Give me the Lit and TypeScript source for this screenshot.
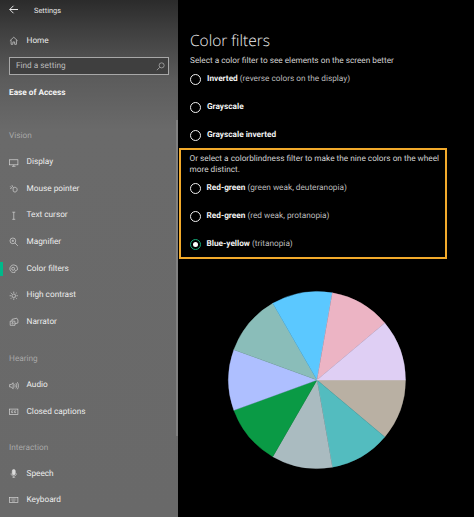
import { LitElement, html, css, svg } from "lit";
import { customElement } from "lit/decorators.js";

const ic = (body: unknown) => html`<svg class="ic" viewBox="0 0 16 16" fill="none" stroke="currentColor" stroke-width="1">${body}</svg>`;

const icons: Record<string, unknown> = {
  home: svg`<path d="M1.500 8 8 2l6.500 6M3.500 7v7h3v-4h3v4h3V7"/>`,
  display: svg`<rect x="1" y="3" width="14" height="8.500"/><path d="M8 11.500V14M5 14h6"/>`,
  mouse: svg`<path d="M2 4l3 3M5 2l1 3M2 7.500h2"/><path d="M7 6v6c1 2 5 2 6 0 1-2 1-4 0-5-1-1.500-4-2-6-1Z"/>`,
  text: svg`<path d="M5.500 2h5M5.500 14h5M8 2v12"/>`,
  magnifier: svg`<circle cx="6.500" cy="6.500" r="4.800"/><path d="M10 10l5 5M4.500 6.500h4M6.500 4.500v4"/>`,
  color: svg`<path d="M8 1.500a6.500 6.500 0 1 0 2 12.700c1-.6-.6-2 .4-3s4 .7 4-3.200A6.500 6.500 0 0 0 8 1.500Z"/><circle cx="7" cy="8" r="2.500"/>`,
  contrast: svg`<circle cx="8" cy="8" r="3"/><path d="M8 1v2.500M8 12.500V15M1 8h2.500M12.500 8H15M3 3l1.800 1.800M11.200 11.200 13 13M13 3l-1.800 1.800M4.800 11.200 3 13"/>`,
  narrator: svg`<path d="M2 7h8v7H2zM5 7V4l8-2 2 3v5l-5 1.500"/><circle cx="6" cy="10.500" r="1.200"/>`,
  audio: svg`<path d="M1 6v4h2.500L7 13V3L3.500 6ZM9.500 5.500c1 1.500 1 3.500 0 5M11.500 3.500c2 2.500 2 6.500 0 9M14 2c2.500 3.500 2.500 8.500 0 12" />`,
  captions: svg`<rect x="1" y="3.500" width="14" height="9"/><path d="M7 6.500H4.500v3H7M12 6.500H9.500v3H12"/>`,
  speech: svg`<rect x="5.500" y="1" width="5" height="9" rx="2.500" fill="currentColor"/><path d="M3.500 7.500c0 6 9 6 9 0M8 12.500V15M5.500 15h5"/>`,
  keyboard: svg`<rect x="1" y="4" width="14" height="8.500"/><path d="M3 6.500h10M3 8.500h10M5 10.500h6" stroke-dasharray="1.200 .8"/>`,
};

type Row = { icon: string; label: string; on?: boolean };
const vision: Row[] = [
  { icon: "display", label: "Display" },
  { icon: "mouse", label: "Mouse pointer" },
  { icon: "text", label: "Text cursor" },
  { icon: "magnifier", label: "Magnifier" },
  { icon: "color", label: "Color filters", on: true },
  { icon: "contrast", label: "High contrast" },
  { icon: "narrator", label: "Narrator" },
];
const hearing: Row[] = [
  { icon: "audio", label: "Audio" },
  { icon: "captions", label: "Closed captions" },
];
const interaction: Row[] = [
  { icon: "speech", label: "Speech" },
  { icon: "keyboard", label: "Keyboard" },
];

const sliceColors = ["#b9b0a3", "#53bcbf", "#aabbc0", "#0a9a45", "#aebfff", "#8abdb9", "#5bc8ff", "#ecb4c4", "#dfcff4"];

function slice(i: number) {
  const r = 88.5;
  const a0 = (i * 40 * Math.PI) / 180;
  const a1 = ((i + 1) * 40 * Math.PI) / 180;
  const d = `M0 0L${r * Math.cos(a0)} ${r * Math.sin(a0)}A${r} ${r} 0 0 1 ${r * Math.cos(a1)} ${r * Math.sin(a1)}Z`;
  return svg`<path d=${d} fill=${sliceColors[i]} stroke=${sliceColors[i]} stroke-width="0.4" />`;
}

@customElement("app-root")
export class AppRoot extends LitElement {
  static styles = css`
    :host {
      display: grid;
      grid-template-columns: 178px 296px;
      width: 474px;
      height: 517px;
      overflow: hidden;
      font-family: Roboto, "Noto Sans", sans-serif;
      font-size: 8.250px;
      text-rendering: geometricPrecision;
      background: #000;
    }
    .side {
      position: relative;
      height: 517px;
      overflow: hidden;
      padding: 0 0 0 9px;
      box-sizing: border-box;
      background: linear-gradient(#2b2b2b 0, #3f3f3f 30px, #5c5c5c 80px, #6a6a6a 130px, #696969 100%);
      color: #ececec;
      display: flex;
      flex-direction: column;
    }
    .scroll {
      position: absolute;
      right: 0;
      top: 120px;
      width: 2px;
      height: 316px;
      background: #808080;
    }
    .title {
      display: flex;
      align-items: center;
      color: #e6e6e6;
      font-size: 7.400px;
    }
    .back {
      width: 9px;
      height: 9px;
      margin: 0 16px 0 0;
      flex: none;
      transform: translate(0, -1px);
    }
    .title-row { height: 18px; margin-bottom: 13px; padding-top: 1px; }
    .row {
      display: flex;
      align-items: center;
      gap: 8px;
      height: 26.600px;
      flex: none;
    }
    .home { height: 18px; margin-bottom: 7px; }
    .ic {
      width: 9.500px;
      height: 9.500px;
      flex: none;
      color: #dcdcdc;
      stroke-width: 1.100;
    }
    .label { color: #ececec; white-space: nowrap; }
    .on { position: relative; }
    .marker {
      position: absolute;
      left: -9px;
      top: 6.500px;
      width: 2.500px;
      height: 14px;
      background: #00b98a;
    }
    .search {
      display: flex;
      align-items: center;
      justify-content: space-between;
      box-sizing: border-box;
      width: 160px;
      height: 18px;
      padding: 0 3px 0 6px;
      border: 1px solid #a8a8a8;
      background: #3f3f3f;
      color: #bdbdbd;
    }
    .search svg { width: 9px; height: 9px; color: #bdbdbd; }
    .section {
      font-weight: 700;
      color: #f4f4f4;
      margin-top: 10px;
      height: 17px;
      line-height: 17px;
    }
    .group {
      color: #a8a8a8;
      height: 17px;
      line-height: 17px;
    }
    .g1 { margin-top: 26px; margin-bottom: 4px; }
    .g2 { margin-top: 16px; margin-bottom: 4px; }
    .g3 { margin-top: 15px; margin-bottom: 3px; }
    .main {
      background: #000;
      color: #d8d8d8;
      padding: 0 28px 0 12px;
      height: 517px;
      box-sizing: border-box;
      position: relative;
    }
    h1 {
      font-weight: 300;
      font-family: "Open Sans", "Noto Sans", sans-serif;
      font-size: 15.500px;
      color: #f0f0f0;
      margin: 0;
      padding-top: 29px;
      line-height: 22px;
    }
    p {
      margin: 0;
      line-height: 11px;
      color: #d4d4d4;
    }
    .intro { margin-top: 4.500px; margin-bottom: -1.100px; }
    .opt {
      display: flex;
      align-items: center;
      gap: 6px;
      height: 28px;
      color: #bdbdbd;
      white-space: nowrap;
    }
    .opt b { color: #f2f2f2; font-weight: 700; }
    .radio {
      width: 11px;
      height: 11px;
      box-sizing: border-box;
      border: 1px solid #f0f0f0;
      border-radius: 50%;
      flex: none;
      display: grid;
      place-items: center;
    }
    .radio.sel { border-color: #14a878; }
    .radio.sel::after {
      content: "";
      width: 5px;
      height: 5px;
      background: #fff;
      border-radius: 50%;
    }
    .box {
      margin: -1.700px 0 0 -11px;
      width: 268px;
      height: 111px;
      box-sizing: border-box;
      border: 2.500px solid #f2aa2b;
      padding: 4px 0 0 8.500px;
    }
    .box p { margin-bottom: -1.600px; }
    .pie {
      display: block;
      width: 180px;
      height: 180px;
      margin: 31.500px 0 0 36.700px;
    }
  `;

  private rows(list: Row[]) {
    return list.map(
      (r) => html`<div class="row ${r.on ? "on" : ""}">
        ${r.on ? html`<span class="marker"></span>` : ""}
        ${ic(icons[r.icon])}<span class="label">${r.label}</span>
      </div>`
    );
  }

  render() {
    return html`
      <nav class="side">
        <div class="title title-row">
          <svg class="back" viewBox="0 0 12 12" fill="none" stroke="#fff" stroke-width="1.200"><path d="M6 1 1 6l5 5M1 6h11" /></svg>
          Settings
        </div>
        <div class="row home">${ic(icons.home)}<span class="label">Home</span></div>
        <div class="search">
          <span>Find a setting</span>
          <svg viewBox="0 0 16 16" fill="none" stroke="currentColor" stroke-width="1.200"><circle cx="10" cy="6" r="4.500" /><path d="M6.500 9.500 1.500 14.500" /></svg>
        </div>
        <div class="section">Ease of Access</div>
        <div class="group g1">Vision</div>
        ${this.rows(vision)}
        <div class="group g2">Hearing</div>
        ${this.rows(hearing)}
        <div class="group g3">Interaction</div>
        ${this.rows(interaction)}
        <div class="scroll"></div>
      </nav>
      <main class="main">
        <h1>Color filters</h1>
        <p class="intro">Select a color filter to see elements on the screen better</p>
        <div class="opt"><span class="radio"></span><span><b>Inverted</b> (reverse colors on the display)</span></div>
        <div class="opt"><span class="radio"></span><span><b>Grayscale</b></span></div>
        <div class="opt"><span class="radio"></span><span><b>Grayscale inverted</b></span></div>
        <div class="box">
          <p>Or select a colorblindness filter to make the nine colors on the wheel more distinct.</p>
          <div class="opt"><span class="radio"></span><span><b>Red-green</b> (green weak, deuteranopia)</span></div>
          <div class="opt"><span class="radio"></span><span><b>Red-green</b> (red weak, protanopia)</span></div>
          <div class="opt"><span class="radio sel"></span><span><b>Blue-yellow</b> (tritanopia)</span></div>
        </div>
        <svg class="pie" viewBox="-90 -90 180 180">${sliceColors.map((_, i) => slice(i))}</svg>
      </main>
    `;
  }
}
